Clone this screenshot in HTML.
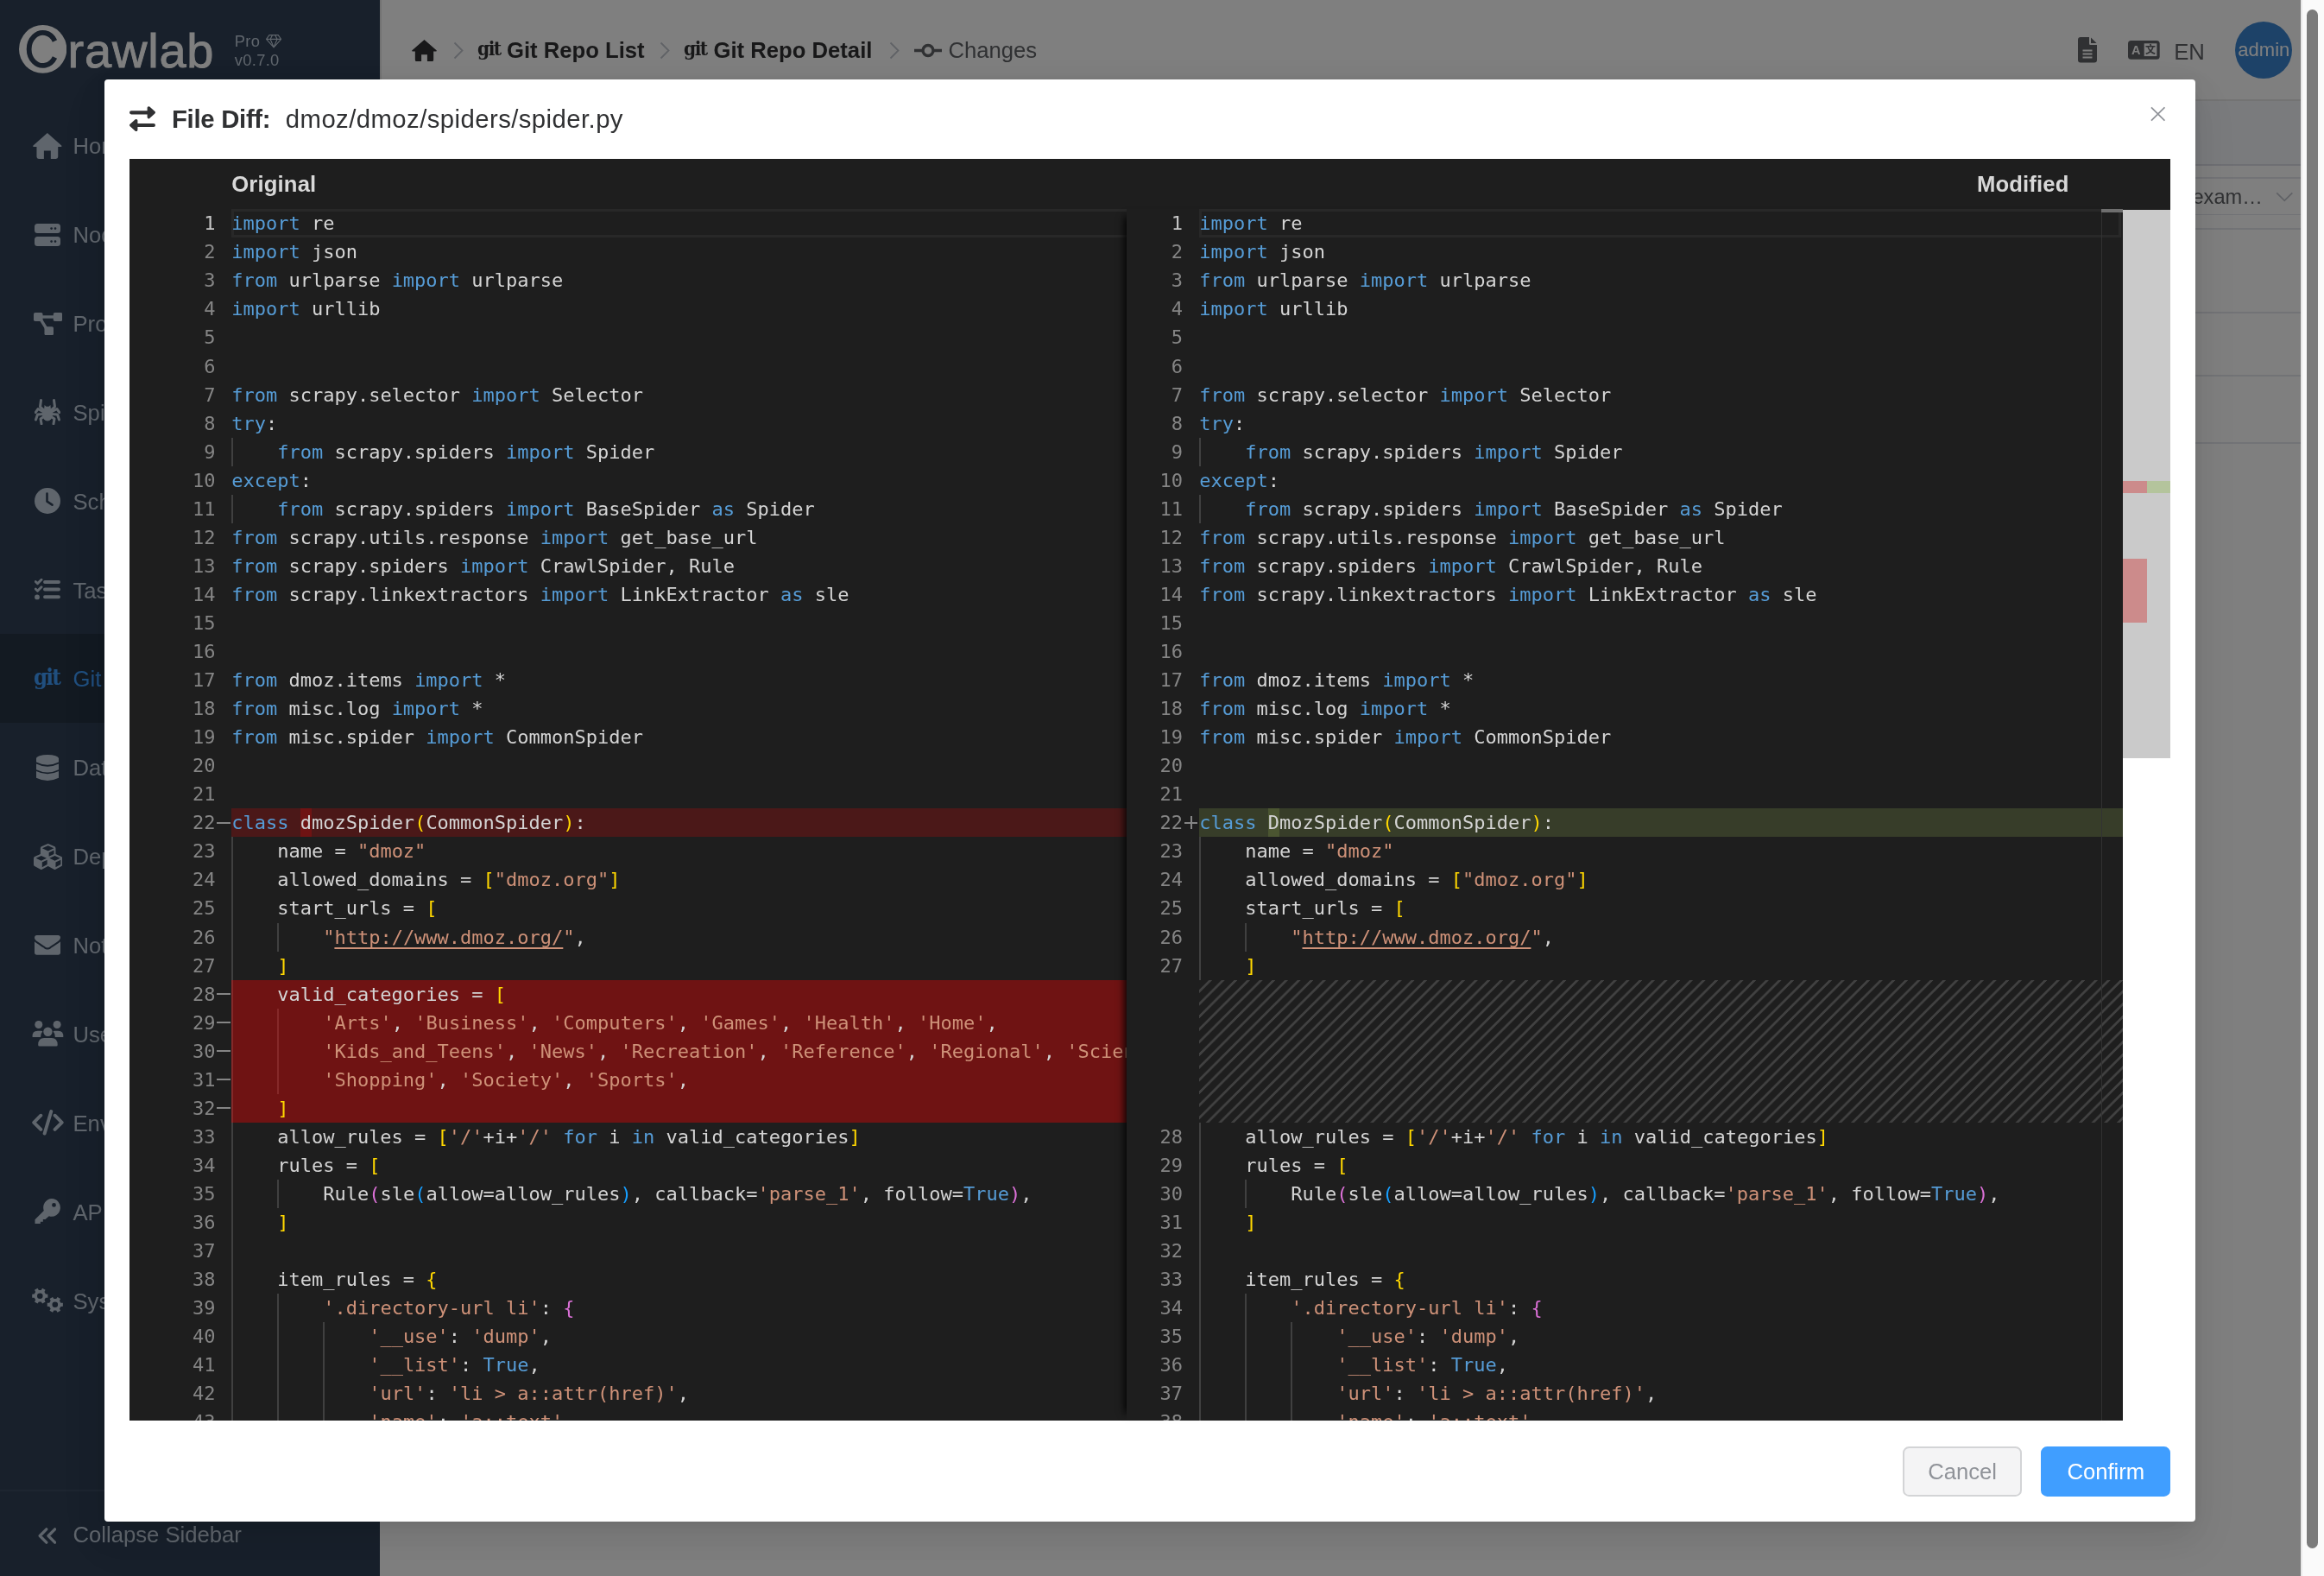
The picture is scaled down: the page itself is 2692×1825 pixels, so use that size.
<!DOCTYPE html><html><head><meta charset="utf-8"><title>Crawlab</title><style>
*{box-sizing:border-box}
html,body{margin:0;padding:0}
body{width:2692px;height:1825px;overflow:hidden;position:relative;background:#fff;font-family:"Liberation Sans",sans-serif;font-size:25.67px;color:#303133}
.abs,.ic,.mi,.n,.l,.g{position:absolute}
#root{position:absolute;left:0;top:0;width:2692px;height:1825px;will-change:transform}
#app{position:absolute;left:0;top:0;width:2664.5px;height:1825px;background:#fff;overflow:hidden}
#side{position:absolute;left:0;top:0;width:440px;height:1825px;background:#304156;overflow:hidden}
.mi{left:0;width:440px;height:102.67px;line-height:102.67px;color:#bfcbd9;font-size:25.67px}
.mi span{position:absolute;left:84.5px}
.mi.act{color:#409eff}
.gitb{position:absolute;top:43px;font-family:"DejaVu Serif Condensed","DejaVu Serif",serif;font-weight:bold;font-size:22.5px;line-height:26px;letter-spacing:-1.500px;color:#303133}
.gitic{position:absolute;font-family:"DejaVu Serif Condensed","DejaVu Serif",serif;font-weight:bold;font-size:25.5px;line-height:30px;letter-spacing:-1.700px}
#hdr{position:absolute;left:440px;top:0;width:2224.5px;height:117.33px;background:#fff;border-bottom:2px solid #e6e6e6;border-left:2px solid #e6e6e6}
.bc{position:absolute;top:0;height:117.33px;line-height:117.33px;font-size:25.67px;white-space:nowrap}
.bc.b{font-weight:bold;color:#303133}
.bc.gr{color:#606266}
#ovl{position:absolute;left:0;top:0;width:2664.5px;height:1825px;background:rgba(0,0,0,.5)}
#sb{position:absolute;left:2664.5px;top:0;width:27.5px;height:1825px;background:#fafafa;border-left:2px solid #e8e8e8}
#sb i{position:absolute;left:5.500px;top:11px;width:13px;height:1782px;border-radius:7px;background:#7b7b7b}
#dlg{position:absolute;left:121.4px;top:92px;width:2421.9px;height:1670px;background:#fff;border-radius:4px;box-shadow:0 22px 59px 7px rgba(0,0,0,.04),0 15px 37px rgba(0,0,0,.08),0 0 12px rgba(0,0,0,.06)}
#ttl{position:absolute;left:199px;top:92px;height:91.67px;line-height:91.67px;font-size:29.33px;color:#303133;white-space:nowrap}
#ttl b{letter-spacing:-0.3px}
#ttl span{position:absolute;left:131.800px;letter-spacing:.42px}
#ed{position:absolute;left:150.3px;top:184px;width:2364.1px;height:58.5px;background:#1e1e1e}
.eh{position:absolute;top:184px;height:58.67px;line-height:58.67px;font-weight:bold;font-size:25.67px;color:#d8d8d8;letter-spacing:.15px;white-space:nowrap}
.pane{position:absolute;overflow:hidden;background:#1e1e1e;font-family:"DejaVu Sans Mono","Liberation Mono",monospace;font-size:22px;color:#d4d4d4}
.n{left:0;height:33.05px;line-height:33.05px;text-align:right;color:#858585;white-space:pre}
.n.a{color:#c6c6c6}
.l{height:33.05px;line-height:33.05px;white-space:pre}
.g{width:1.830px;height:33.1px;background:#404040}
.k{color:#569cd6}.s{color:#ce9178}.b0{color:#ffd700}.b1{color:#da70d6}.b2{color:#179fff}
u{text-decoration:underline;text-decoration-skip-ink:none;text-underline-offset:4px;text-decoration-thickness:1.800px}
.bg{position:absolute}
.btn{position:absolute;top:1674.8px;height:58.67px;line-height:54.67px;border-radius:7.330px;font-size:25.67px;text-align:center;border:2px solid}
</style></head><body><div id="root">
<div id="app">
<div id="hdr"></div>
<svg class="ic" style="left:476.8px;top:45.7px;width:29px;height:25.3px" viewBox="0 0 34 30" preserveAspectRatio="none"><path fill="#303133" d="M17 0L33.500 14.500Q34.300 15.600 33 16L29.500 16L29.500 27.500Q29.500 30 27 30L21 30L21 20.500L13 20.500L13 30L7 30Q4.500 30 4.500 27.500L4.500 16L1 16Q-0.300 15.600 0.500 14.500Z"/></svg>
<svg class="ic" style="left:525px;top:48px;width:12px;height:21px" viewBox="0 0 12 21"><path d="M1.500 1.500L10.500 10.500L1.500 19.500" fill="none" stroke="#c0c4cc" stroke-width="1.800"/></svg>
<svg class="ic" style="left:763.5px;top:48px;width:12px;height:21px" viewBox="0 0 12 21"><path d="M1.500 1.500L10.500 10.500L1.500 19.500" fill="none" stroke="#c0c4cc" stroke-width="1.800"/></svg>
<svg class="ic" style="left:1030px;top:48px;width:12px;height:21px" viewBox="0 0 12 21"><path d="M1.500 1.500L10.500 10.500L1.500 19.500" fill="none" stroke="#c0c4cc" stroke-width="1.800"/></svg>
<div class="gitb" style="left:553px">git</div>
<div class="gitb" style="left:792px">git</div>
<svg class="ic" style="left:1058.5px;top:50px;width:32px;height:17px" viewBox="0 0 32 17"><circle cx="16" cy="8.500" r="6" fill="none" stroke="#606266" stroke-width="3.400"/><path d="M0 8.500h9.500M22.500 8.500H32" stroke="#606266" stroke-width="3.400" stroke-linecap="round"/></svg>
<div class="bc b" style="left:587px">Git Repo List</div>
<div class="bc b" style="left:826.5px">Git Repo Detail</div>
<div class="bc gr" style="left:1098.4px">Changes</div>
<div class="bc gr" style="left:2518.2px;top:1.500px">EN</div>
<div class="abs" style="left:2589.3px;top:24.700px;width:66px;height:66px;border-radius:50%;background:#3a84d0;color:#fff;text-align:center;line-height:65px;font-size:22px">admin</div>
<svg class="ic" style="left:2406.7px;top:43px;width:22px;height:29.500px" viewBox="0 0 22 29.5"><path fill="#606266" fill-rule="evenodd" d="M3 0H13V7.500Q13 9 14.500 9H22V26.500Q22 29.500 19 29.500H3Q0 29.500 0 26.500V3Q0 0 3 0ZM15 0.400L21.600 7H15ZM5.500 14.600H16.500V16.500H5.500ZM5.500 18.600H16.500V20.500H5.500ZM5.500 22.600H16.500V24.500H5.500Z"/></svg>
<svg class="ic" style="left:2465.2px;top:46.900px;width:36.700px;height:21.800px" viewBox="0 0 36.7 21.8"><rect width="36.700" height="21.800" rx="3.600" fill="#606266"/><rect x="18.700" y="3.300" width="14.700" height="14.800" fill="#fff"/><text x="9.200" y="16.400" text-anchor="middle" font-family="Liberation Sans,sans-serif" font-weight="bold" font-size="14.500" fill="#fff">A</text><text x="26.050" y="15.200" text-anchor="middle" font-family="Noto Sans CJK SC,sans-serif" font-weight="bold" font-size="12" fill="#606266">文</text></svg>
<div class="abs" style="left:442px;top:117.33px;width:2222.5px;height:74.500px;background:#f5f7fa;border-bottom:2px solid #dcdfe6"></div>
<div class="abs" style="left:2500px;top:205.4px;width:164.500px;height:1.830px;background:#e4e7ed"></div>
<div class="abs" style="left:2500px;top:247.5px;width:164.500px;height:1.830px;background:#e4e7ed"></div>
<div class="abs" style="left:2500px;top:264px;width:164.500px;height:1.830px;background:#e4e7ed"></div>
<div class="abs" style="left:2500px;top:360.8px;width:164.500px;height:1.830px;background:#e4e7ed"></div>
<div class="abs" style="left:2500px;top:434.1px;width:164.500px;height:1.830px;background:#e4e7ed"></div>
<div class="abs" style="left:2500px;top:511.9px;width:164.500px;height:1.830px;background:#e4e7ed"></div>
<div class="abs" style="left:2539.5px;top:213px;font-size:23.600px;line-height:30px;color:#606266;white-space:nowrap">exam&#8230;</div>
<svg class="ic" style="left:2636px;top:222px;width:20.500px;height:12px" viewBox="0 0 20.5 12"><path d="M1.200 1.300L10.250 10.300L19.300 1.300" fill="none" stroke="#c0c4cc" stroke-width="1.800"/></svg>
<div id="side">
<div class="abs" style="left:0;top:734.4px;width:440px;height:102.4px;background:#263445"></div>
<div class="mi" style="top:118.00px"><span>Home</span></div>
<div class="mi" style="top:220.90px"><span>Nodes</span></div>
<div class="mi" style="top:323.80px"><span>Projects</span></div>
<div class="mi" style="top:426.70px"><span>Spiders</span></div>
<div class="mi" style="top:529.60px"><span>Schedules</span></div>
<div class="mi" style="top:632.50px"><span>Tasks</span></div>
<div class="mi act" style="top:735.40px"><span>Git</span></div>
<div class="mi" style="top:838.30px"><span>Data Sources</span></div>
<div class="mi" style="top:941.20px"><span>Dependencies</span></div>
<div class="mi" style="top:1044.10px"><span>Notifications</span></div>
<div class="mi" style="top:1147.00px"><span>Users</span></div>
<div class="mi" style="top:1249.90px"><span>Environment</span></div>
<div class="mi" style="top:1352.80px"><span>API Tokens</span></div>
<div class="mi" style="top:1455.70px"><span>System</span></div>
<svg class="ic" style="left:38.1px;top:153.9px;width:33.7px;height:29.9px" viewBox="0 0 34 30" preserveAspectRatio="none"><path fill="#bfcbd9" d="M17 0L33.500 14.500Q34.300 15.600 33 16L29.500 16L29.500 27.500Q29.500 30 27 30L21 30L21 20.500L13 20.500L13 30L7 30Q4.500 30 4.500 27.500L4.500 16L1 16Q-0.300 15.600 0.500 14.500Z"/></svg>
<svg class="ic" style="left:40px;top:259px;width:30px;height:26px" viewBox="0 0 30 26"><path fill="#bfcbd9" fill-rule="evenodd" d="M3.5 0h23a3.5 3.5 0 0 1 3.5 3.5v4a3.5 3.5 0 0 1-3.5 3.5h-23A3.5 3.5 0 0 1 0 7.500v-4A3.5 3.5 0 0 1 3.5 0zM19.600 4.200a1.400 1.400 0 1 0 0 2.800a1.400 1.400 0 1 0 0-2.800zM24 4.200a1.400 1.400 0 1 0 0 2.800a1.400 1.400 0 1 0 0-2.800zM3.5 15h23a3.5 3.5 0 0 1 3.5 3.5v4a3.5 3.5 0 0 1-3.5 3.5h-23A3.5 3.5 0 0 1 0 22.500v-4A3.5 3.5 0 0 1 3.500 15zM19.600 19.200a1.400 1.400 0 1 0 0 2.800a1.400 1.400 0 1 0 0-2.800zM24 19.200a1.400 1.400 0 1 0 0 2.800a1.400 1.400 0 1 0 0-2.800z"/></svg>
<svg class="ic" style="left:38.5px;top:361.5px;width:33.3px;height:26.2px" viewBox="0 0 33.3 26.2"><g fill="#bfcbd9"><rect x="0" y="0" width="10.500" height="10" rx="1.800"/><rect x="22.800" y="0" width="10.500" height="10" rx="1.800"/><rect x="12.500" y="16.200" width="10.500" height="10" rx="1.800"/><rect x="9" y="3.300" width="15" height="3.400"/><path d="M6.500 8.500l3-1.700l7.500 12l-3 1.700z"/></g></svg>
<svg class="ic" style="left:40px;top:462.4px;width:30px;height:30.1px" viewBox="0 0 30 30"><g fill="none" stroke="#bfcbd9" stroke-width="3" stroke-linecap="round" stroke-linejoin="round"><path d="M11 13L6.500 9L7.500 1.500"/><path d="M19 13L23.500 9L22.500 1.500"/><path d="M10.500 15L4 11.500L1.200 15.500"/><path d="M19.500 15L26 11.500L28.800 15.500"/><path d="M10.500 17.500L3.500 18L1.500 24"/><path d="M19.500 17.500L26.500 18L28.500 24"/><path d="M11.500 20L7 23L8 28.800"/><path d="M18.500 20L23 23L22 28.800"/></g><ellipse cx="15" cy="18" rx="6" ry="7.500" fill="#bfcbd9"/><path fill="#bfcbd9" d="M11 12.500L11.600 7L13.500 8.800H16.500L18.400 7L19 12.500Z"/></svg>
<svg class="ic" style="left:40px;top:565.2px;width:30px;height:30px" viewBox="0 0 30 30"><circle cx="15" cy="15" r="15" fill="#bfcbd9"/><path d="M14.500 6.500v9.200l6 4" fill="none" stroke="#304156" stroke-width="2.600" stroke-linecap="round" stroke-linejoin="round"/></svg>
<svg class="ic" style="left:40px;top:670.4px;width:30px;height:24.800px" viewBox="0 0 30 24.800"><g fill="none" stroke="#bfcbd9" stroke-linecap="round" stroke-linejoin="round"><path stroke-width="3.900" d="M12 4h16M12 12.500h16M12 21.300h16"/><path stroke-width="2.900" d="M1.200 3.500l2.300 2.300l4.500-4.600M1.200 12l2.300 2.300l4.500-4.600"/></g><circle cx="3" cy="21.400" r="2.900" fill="#bfcbd9"/></svg>
<div class="gitic" style="left:39px;top:769px;color:#409eff">git</div>
<svg class="ic" style="left:41.900px;top:873.9px;width:26.100px;height:29.900px" viewBox="0 0 26 29.9" preserveAspectRatio="none"><g fill="#bfcbd9"><ellipse cx="13" cy="4.600" rx="13" ry="4.600"/><path d="M0 4.600H26V8.500Q13 15 0 8.500Z"/><path d="M0 10.450Q13 16.950 26 10.450V17.150Q13 23.650 0 17.150Z"/><path d="M0 19.050Q13 25.550 26 19.050V26.650Q13 33.150 0 26.650Z"/></g></svg>
<svg class="ic" style="left:38.5px;top:976.8px;width:33.3px;height:29.9px" viewBox="0 0 2176 1792" preserveAspectRatio="none" ><path fill="#bfcbd9" d="M640 1632 1024 1440V1126L640 1290ZM576 1178 980 1005 576 832 172 1005ZM1664 1632 2048 1440V1126L1664 1290ZM1600 1178 2004 1005 1600 832 1196 1005ZM1152 885 1536 720V454L1152 618ZM1088 506 1529 317 1088 128 647 317ZM2176 1024V1440Q2176 1476 2157 1507Q2138 1538 2105 1554L1657 1778Q1632 1792 1600 1792Q1568 1792 1543 1778L1095 1554Q1091 1552 1088 1550Q1086 1552 1081 1554L633 1778Q608 1792 576 1792Q544 1792 519 1778L71 1554Q38 1538 19 1507Q0 1476 0 1440V1024Q0 986 22 954Q43 922 78 906L512 720V320Q512 282 534 250Q555 218 590 202L1038 10Q1061 0 1088 0Q1115 0 1138 10L1586 202Q1621 218 1642 250Q1664 282 1664 320V720L2098 906Q2134 922 2155 954Q2176 986 2176 1024Z"/></svg>
<svg class="ic" style="left:40px;top:1082.8px;width:30px;height:22.8px" viewBox="0 0 1792 1408" preserveAspectRatio="none" ><path fill="#bfcbd9" d="M1792 454V1248Q1792 1314 1745 1361Q1698 1408 1632 1408H160Q94 1408 47 1361Q0 1314 0 1248V454Q44 503 101 541Q463 787 598 886Q655 928 690 952Q726 975 785 1000Q844 1024 895 1024H896H897Q948 1024 1007 1000Q1066 975 1102 952Q1137 928 1194 886Q1364 763 1692 541Q1749 502 1792 454ZM1792 160Q1792 239 1743 311Q1694 383 1621 434Q1245 695 1153 759Q1143 766 1110 790Q1078 813 1056 828Q1035 842 1004 860Q974 878 947 887Q920 896 897 896H896H895Q872 896 845 887Q818 878 788 860Q757 842 736 828Q714 813 682 790Q649 766 639 759Q548 695 377 576Q206 458 172 434Q110 392 55 318Q0 245 0 182Q0 104 42 52Q83 0 160 0H1632Q1697 0 1744 47Q1792 94 1792 160Z"/></svg>
<svg class="ic" style="left:36.800px;top:1182.4px;width:36.900px;height:29.500px" viewBox="0 0 36.9 29.5"><g fill="#bfcbd9"><circle cx="7.800" cy="4.500" r="4.500"/><circle cx="29.100" cy="4.500" r="4.500"/><circle cx="18.450" cy="12.800" r="5.200"/><path d="M0.600 19Q0 11.800 6.500 11.800H10.800Q11.800 11.800 12.300 12.600Q9.800 15 10 19Z"/><path d="M36.300 19Q36.900 11.800 30.400 11.800H26.100Q25.100 11.800 24.600 12.600Q27.100 15 26.900 19Z"/><path d="M7.200 28Q7.200 20 14.200 20H22.700Q29.700 20 29.700 28Q29.700 29.500 28.200 29.500H8.700Q7.200 29.500 7.200 28Z"/></g></svg>
<svg class="ic" style="left:36.800px;top:1285.2px;width:36.900px;height:29.600px" viewBox="0 0 36.9 29.6"><g fill="none" stroke="#bfcbd9" stroke-width="3.900" stroke-linecap="round" stroke-linejoin="round"><path d="M10.300 6.700L2.200 14.800L10.300 22.900"/><path d="M26.600 6.700L34.700 14.800L26.600 22.900"/><path d="M22.300 2L14.600 27.600"/></g></svg>
<svg class="ic" style="left:40px;top:1387.6px;width:30px;height:29.400px" viewBox="0 0 30 29.4"><path fill="#bfcbd9" fill-rule="evenodd" d="M20 0a10 10.400 0 1 1 -3.200 20.300L12.500 24H9.800V26.800H6.800V29.400H0.500V24.200L10.800 14A10 10.400 0 0 1 20 0ZM22.500 5a2.400 2.400 0 1 0 0 4.800a2.400 2.400 0 1 0 0-4.800Z"/></svg>
<svg class="ic" style="left:36.800px;top:1491px;width:36.500px;height:29.400px" viewBox="0 0 36.5 29.4"><path fill="#bfcbd9" fill-rule="evenodd" d="M15.86 7.57L18.38 7.67L18.38 11.73L15.86 11.83L14.43 14.32L15.59 16.55L12.08 18.57L10.73 16.45L7.87 16.45L6.52 18.57L3.01 16.55L4.17 14.32L2.74 11.83L0.22 11.73L0.22 7.67L2.74 7.57L4.17 5.08L3.01 2.85L6.52 0.83L7.87 2.95L10.73 2.95L12.08 0.83L15.59 2.85L14.43 5.08ZM6.00 9.70a3.3 3.3 0 1 0 6.6 0a3.3 3.3 0 1 0 -6.6 0ZM33.36 17.67L35.88 17.77L35.88 21.83L33.36 21.93L31.93 24.42L33.09 26.65L29.58 28.67L28.23 26.55L25.37 26.55L24.02 28.67L20.51 26.65L21.67 24.42L20.24 21.93L17.72 21.83L17.72 17.77L20.24 17.67L21.67 15.18L20.51 12.95L24.02 10.93L25.37 13.05L28.23 13.05L29.58 10.93L33.09 12.95L31.93 15.18ZM23.50 19.80a3.3 3.3 0 1 0 6.6 0a3.3 3.3 0 1 0 -6.6 0Z"/></svg>
<div class="abs" style="left:78.500px;top:24.500px;font-size:56px;line-height:68px;letter-spacing:.8px;color:#fff;-webkit-text-stroke:.9px #fff;white-space:nowrap">rawlab</div>
<svg class="ic" style="left:22.040px;top:29.140px;width:55.300px;height:55.800px" viewBox="0 0 55.3 55.8"><ellipse cx="27.650" cy="27.900" rx="27.650" ry="27.900" fill="#fff"/><path d="M41.500 18.400A16 19 0 1 0 41.500 37.400" fill="none" stroke="#304156" stroke-width="5.800"/></svg>
<div class="abs" style="left:271.8px;top:36.500px;font-size:18.33px;line-height:22px;letter-spacing:.3px;color:#bfcbd9;white-space:nowrap">Pro</div>
<div class="abs" style="left:271.8px;top:58.500px;font-size:18.33px;line-height:22px;letter-spacing:.3px;color:#bfcbd9;white-space:nowrap">v0.7.0</div>
<svg class="ic" style="left:307.5px;top:40.2px;width:18.2px;height:15.5px" viewBox="0 0 2048 1664" preserveAspectRatio="none" ><path fill="#bfcbd9" d="M212 640 835 1305 535 640ZM1024 1412 1373 640H675ZM538 512 742 128H480L192 512ZM1213 1305 1836 640H1513ZM683 512H1365L1161 128H887ZM1510 512H1856L1568 128H1306ZM1651 26 2035 538Q2049 556 2048 580Q2047 603 2031 620L1071 1644Q1053 1664 1024 1664Q995 1664 977 1644L17 620Q1 603 0 580Q-1 556 13 538L397 26Q415 0 448 0H1600Q1633 0 1651 26Z"/></svg>
<div class="abs" style="left:0;top:1724.5px;width:440px;height:101px;border-top:2px solid #3a4b60;background:#304156;color:#bfcbd9;line-height:101px"><span style="position:absolute;left:84.5px">Collapse Sidebar</span></div>
<svg class="ic" style="left:43.500px;top:1768.5px;width:21.500px;height:19px" viewBox="0 0 21.5 19"><path d="M9.800 1.800L2.200 9.500L9.800 17.200M19.600 1.800L12 9.500L19.600 17.200" fill="none" stroke="#bfcbd9" stroke-width="3.300" stroke-linejoin="round" stroke-linecap="round"/></svg>
</div>
</div>
<div id="ovl"></div>
<div id="sb"><i></i></div>
<div id="dlg"></div>
<svg class="ic" style="left:150.1px;top:122.9px;width:30px;height:29.500px" viewBox="0 0 30 29.5"><g stroke="#303133" fill="#303133" stroke-linecap="round" stroke-linejoin="round"><path d="M2.100 7.300H22M27.900 22H8" stroke-width="4.200" fill="none"/><path d="M22.200 1.800L28.300 7.300L22.200 12.800ZM7.800 16.500L1.700 22L7.800 27.500Z" stroke-width="3.200"/></g></svg>
<div id="ttl"><b>File Diff:</b><span>dmoz/dmoz/spiders/spider.py</span></div>
<svg class="ic" style="left:2490.6px;top:123px;width:17.400px;height:18px" viewBox="0 0 18 18"><path d="M1 1L17 17M17 1L1 17" stroke="#909399" stroke-width="1.800" fill="none"/></svg>
<div id="ed"></div>
<div class="eh" style="left:268.2px">Original</div>
<div class="eh" style="left:2289.9px">Modified</div>
<div class="abs" style="left:2458.7px;top:242.67px;width:55.700px;height:635.6px;background:#cacaca"></div>
<div class="abs" style="left:2458.7px;top:556.8px;width:28.100px;height:14.100px;background:#cc8b8b"></div>
<div class="abs" style="left:2486.8px;top:556.8px;width:27.600px;height:14.100px;background:#b4c49c"></div>
<div class="abs" style="left:2458.7px;top:646.9px;width:28.100px;height:74.100px;background:#cc8b8b"></div>
<div class="pane" style="left:150.3px;top:242.3px;width:1154.60px;height:1402.70px">
<i class="g" style="left:117.90px;top:264.4px"></i>
<i class="g" style="left:117.90px;top:330.5px"></i>
<i class="g" style="left:117.90px;top:727.1px"></i>
<i class="g" style="left:117.90px;top:760.15px"></i>
<i class="g" style="left:117.90px;top:793.2px"></i>
<i class="g" style="left:117.90px;top:826.25px"></i>
<i class="g" style="left:170.88px;top:826.25px"></i>
<i class="g" style="left:117.90px;top:859.3px"></i>
<i class="g" style="left:117.90px;top:892.35px"></i>
<i class="g" style="left:117.90px;top:925.4px"></i>
<i class="g" style="left:170.88px;top:925.4px"></i>
<i class="g" style="left:117.90px;top:958.45px"></i>
<i class="g" style="left:170.88px;top:958.45px"></i>
<i class="g" style="left:117.90px;top:991.5px"></i>
<i class="g" style="left:170.88px;top:991.5px"></i>
<i class="g" style="left:117.90px;top:1024.55px"></i>
<i class="g" style="left:117.90px;top:1057.6px"></i>
<i class="g" style="left:117.90px;top:1090.65px"></i>
<i class="g" style="left:117.90px;top:1123.7px"></i>
<i class="g" style="left:170.88px;top:1123.7px"></i>
<i class="g" style="left:117.90px;top:1156.75px"></i>
<i class="g" style="left:117.90px;top:1189.8px"></i>
<i class="g" style="left:117.90px;top:1222.85px"></i>
<i class="g" style="left:117.90px;top:1255.9px"></i>
<i class="g" style="left:170.88px;top:1255.9px"></i>
<i class="g" style="left:117.90px;top:1288.95px"></i>
<i class="g" style="left:170.88px;top:1288.95px"></i>
<i class="g" style="left:223.86px;top:1288.95px"></i>
<i class="g" style="left:117.90px;top:1322.0px"></i>
<i class="g" style="left:170.88px;top:1322.0px"></i>
<i class="g" style="left:223.86px;top:1322.0px"></i>
<i class="g" style="left:117.90px;top:1355.05px"></i>
<i class="g" style="left:170.88px;top:1355.05px"></i>
<i class="g" style="left:223.86px;top:1355.05px"></i>
<i class="g" style="left:117.90px;top:1388.1px"></i>
<i class="g" style="left:170.88px;top:1388.1px"></i>
<i class="g" style="left:223.86px;top:1388.1px"></i>
<div class="bg" style="left:117.90px;top:694.05px;width:2000px;height:33.05px;background:rgba(255,0,0,.2)"></div>
<div class="bg" style="left:197.37px;top:694.05px;width:13.25px;height:33.05px;background:rgba(255,0,0,.2)"></div>
<div class="bg" style="left:117.90px;top:892.35px;width:2000px;height:165.25px;background:rgba(255,0,0,.36)"></div>
<div class="bg" style="left:117.90px;top:0;width:2000px;height:33.05px;border:3.670px solid #282828"></div>
<div class="bg" style="left:101.20px;top:709.5px;width:15.500px;height:1.800px;background:#858585"></div>
<div class="bg" style="left:101.20px;top:907.8px;width:15.500px;height:1.800px;background:#858585"></div>
<div class="bg" style="left:101.20px;top:940.9px;width:15.500px;height:1.800px;background:#858585"></div>
<div class="bg" style="left:101.20px;top:973.9px;width:15.500px;height:1.800px;background:#858585"></div>
<div class="bg" style="left:101.20px;top:1007.0px;width:15.500px;height:1.800px;background:#858585"></div>
<div class="bg" style="left:101.20px;top:1040.0px;width:15.500px;height:1.800px;background:#858585"></div>
<div class="n a" style="top:0.0px;width:99.19999999999999px">1</div>
<div class="l" style="top:0.0px;left:117.89999999999998px"><span class="k">import</span> re</div>
<div class="n" style="top:33.05px;width:99.19999999999999px">2</div>
<div class="l" style="top:33.05px;left:117.89999999999998px"><span class="k">import</span> json</div>
<div class="n" style="top:66.1px;width:99.19999999999999px">3</div>
<div class="l" style="top:66.1px;left:117.89999999999998px"><span class="k">from</span> urlparse <span class="k">import</span> urlparse</div>
<div class="n" style="top:99.15px;width:99.19999999999999px">4</div>
<div class="l" style="top:99.15px;left:117.89999999999998px"><span class="k">import</span> urllib</div>
<div class="n" style="top:132.2px;width:99.19999999999999px">5</div>
<div class="l" style="top:132.2px;left:117.89999999999998px"></div>
<div class="n" style="top:165.25px;width:99.19999999999999px">6</div>
<div class="l" style="top:165.25px;left:117.89999999999998px"></div>
<div class="n" style="top:198.3px;width:99.19999999999999px">7</div>
<div class="l" style="top:198.3px;left:117.89999999999998px"><span class="k">from</span> scrapy.selector <span class="k">import</span> Selector</div>
<div class="n" style="top:231.35px;width:99.19999999999999px">8</div>
<div class="l" style="top:231.35px;left:117.89999999999998px"><span class="k">try</span>:</div>
<div class="n" style="top:264.4px;width:99.19999999999999px">9</div>
<div class="l" style="top:264.4px;left:117.89999999999998px">    <span class="k">from</span> scrapy.spiders <span class="k">import</span> Spider</div>
<div class="n" style="top:297.45px;width:99.19999999999999px">10</div>
<div class="l" style="top:297.45px;left:117.89999999999998px"><span class="k">except</span>:</div>
<div class="n" style="top:330.5px;width:99.19999999999999px">11</div>
<div class="l" style="top:330.5px;left:117.89999999999998px">    <span class="k">from</span> scrapy.spiders <span class="k">import</span> BaseSpider <span class="k">as</span> Spider</div>
<div class="n" style="top:363.55px;width:99.19999999999999px">12</div>
<div class="l" style="top:363.55px;left:117.89999999999998px"><span class="k">from</span> scrapy.utils.response <span class="k">import</span> get_base_url</div>
<div class="n" style="top:396.6px;width:99.19999999999999px">13</div>
<div class="l" style="top:396.6px;left:117.89999999999998px"><span class="k">from</span> scrapy.spiders <span class="k">import</span> CrawlSpider, Rule</div>
<div class="n" style="top:429.65px;width:99.19999999999999px">14</div>
<div class="l" style="top:429.65px;left:117.89999999999998px"><span class="k">from</span> scrapy.linkextractors <span class="k">import</span> LinkExtractor <span class="k">as</span> sle</div>
<div class="n" style="top:462.7px;width:99.19999999999999px">15</div>
<div class="l" style="top:462.7px;left:117.89999999999998px"></div>
<div class="n" style="top:495.75px;width:99.19999999999999px">16</div>
<div class="l" style="top:495.75px;left:117.89999999999998px"></div>
<div class="n" style="top:528.8px;width:99.19999999999999px">17</div>
<div class="l" style="top:528.8px;left:117.89999999999998px"><span class="k">from</span> dmoz.items <span class="k">import</span> *</div>
<div class="n" style="top:561.85px;width:99.19999999999999px">18</div>
<div class="l" style="top:561.85px;left:117.89999999999998px"><span class="k">from</span> misc.log <span class="k">import</span> *</div>
<div class="n" style="top:594.9px;width:99.19999999999999px">19</div>
<div class="l" style="top:594.9px;left:117.89999999999998px"><span class="k">from</span> misc.spider <span class="k">import</span> CommonSpider</div>
<div class="n" style="top:627.95px;width:99.19999999999999px">20</div>
<div class="l" style="top:627.95px;left:117.89999999999998px"></div>
<div class="n" style="top:661.0px;width:99.19999999999999px">21</div>
<div class="l" style="top:661.0px;left:117.89999999999998px"></div>
<div class="n" style="top:694.05px;width:99.19999999999999px">22</div>
<div class="l" style="top:694.05px;left:117.89999999999998px"><span class="k">class</span> dmozSpider<span class="b0">(</span>CommonSpider<span class="b0">)</span>:</div>
<div class="n" style="top:727.1px;width:99.19999999999999px">23</div>
<div class="l" style="top:727.1px;left:117.89999999999998px">    name = <span class="s">"dmoz"</span></div>
<div class="n" style="top:760.15px;width:99.19999999999999px">24</div>
<div class="l" style="top:760.15px;left:117.89999999999998px">    allowed_domains = <span class="b0">[</span><span class="s">"dmoz.org"</span><span class="b0">]</span></div>
<div class="n" style="top:793.2px;width:99.19999999999999px">25</div>
<div class="l" style="top:793.2px;left:117.89999999999998px">    start_urls = <span class="b0">[</span></div>
<div class="n" style="top:826.25px;width:99.19999999999999px">26</div>
<div class="l" style="top:826.25px;left:117.89999999999998px">        <span class="s">"<u>http://www.dmoz.org/</u>"</span>,</div>
<div class="n" style="top:859.3px;width:99.19999999999999px">27</div>
<div class="l" style="top:859.3px;left:117.89999999999998px">    <span class="b0">]</span></div>
<div class="n" style="top:892.35px;width:99.19999999999999px">28</div>
<div class="l" style="top:892.35px;left:117.89999999999998px">    valid_categories = <span class="b0">[</span></div>
<div class="n" style="top:925.4px;width:99.19999999999999px">29</div>
<div class="l" style="top:925.4px;left:117.89999999999998px">        <span class="s">'Arts'</span>, <span class="s">'Business'</span>, <span class="s">'Computers'</span>, <span class="s">'Games'</span>, <span class="s">'Health'</span>, <span class="s">'Home'</span>,</div>
<div class="n" style="top:958.45px;width:99.19999999999999px">30</div>
<div class="l" style="top:958.45px;left:117.89999999999998px">        <span class="s">'Kids_and_Teens'</span>, <span class="s">'News'</span>, <span class="s">'Recreation'</span>, <span class="s">'Reference'</span>, <span class="s">'Regional'</span>, <span class="s">'Science'</span>,</div>
<div class="n" style="top:991.5px;width:99.19999999999999px">31</div>
<div class="l" style="top:991.5px;left:117.89999999999998px">        <span class="s">'Shopping'</span>, <span class="s">'Society'</span>, <span class="s">'Sports'</span>,</div>
<div class="n" style="top:1024.55px;width:99.19999999999999px">32</div>
<div class="l" style="top:1024.55px;left:117.89999999999998px">    <span class="b0">]</span></div>
<div class="n" style="top:1057.6px;width:99.19999999999999px">33</div>
<div class="l" style="top:1057.6px;left:117.89999999999998px">    allow_rules = <span class="b0">[</span><span class="s">'/'</span>+i+<span class="s">'/'</span> <span class="k">for</span> i <span class="k">in</span> valid_categories<span class="b0">]</span></div>
<div class="n" style="top:1090.65px;width:99.19999999999999px">34</div>
<div class="l" style="top:1090.65px;left:117.89999999999998px">    rules = <span class="b0">[</span></div>
<div class="n" style="top:1123.7px;width:99.19999999999999px">35</div>
<div class="l" style="top:1123.7px;left:117.89999999999998px">        Rule<span class="b1">(</span>sle<span class="b2">(</span>allow=allow_rules<span class="b2">)</span>, callback=<span class="s">'parse_1'</span>, follow=<span class="k">True</span><span class="b1">)</span>,</div>
<div class="n" style="top:1156.75px;width:99.19999999999999px">36</div>
<div class="l" style="top:1156.75px;left:117.89999999999998px">    <span class="b0">]</span></div>
<div class="n" style="top:1189.8px;width:99.19999999999999px">37</div>
<div class="l" style="top:1189.8px;left:117.89999999999998px"></div>
<div class="n" style="top:1222.85px;width:99.19999999999999px">38</div>
<div class="l" style="top:1222.85px;left:117.89999999999998px">    item_rules = <span class="b0">{</span></div>
<div class="n" style="top:1255.9px;width:99.19999999999999px">39</div>
<div class="l" style="top:1255.9px;left:117.89999999999998px">        <span class="s">'.directory-url li'</span>: <span class="b1">{</span></div>
<div class="n" style="top:1288.95px;width:99.19999999999999px">40</div>
<div class="l" style="top:1288.95px;left:117.89999999999998px">            <span class="s">'__use'</span>: <span class="s">'dump'</span>,</div>
<div class="n" style="top:1322.0px;width:99.19999999999999px">41</div>
<div class="l" style="top:1322.0px;left:117.89999999999998px">            <span class="s">'__list'</span>: <span class="k">True</span>,</div>
<div class="n" style="top:1355.05px;width:99.19999999999999px">42</div>
<div class="l" style="top:1355.05px;left:117.89999999999998px">            <span class="s">'url'</span>: <span class="s">'li &gt; a::attr(href)'</span>,</div>
<div class="n" style="top:1388.1px;width:99.19999999999999px">43</div>
<div class="l" style="top:1388.1px;left:117.89999999999998px">            <span class="s">'name'</span>: <span class="s">'a::text'</span>,</div>
</div>
<div class="pane" style="left:1304.9px;top:242.3px;width:1153.80px;height:1402.70px;box-shadow:-11px 0 9px -9px #000">
<i class="g" style="left:84.40px;top:264.4px"></i>
<i class="g" style="left:84.40px;top:330.5px"></i>
<i class="g" style="left:84.40px;top:727.1px"></i>
<i class="g" style="left:84.40px;top:760.15px"></i>
<i class="g" style="left:84.40px;top:793.2px"></i>
<i class="g" style="left:84.40px;top:826.25px"></i>
<i class="g" style="left:137.38px;top:826.25px"></i>
<i class="g" style="left:84.40px;top:859.3px"></i>
<i class="g" style="left:84.40px;top:1057.6px"></i>
<i class="g" style="left:84.40px;top:1090.65px"></i>
<i class="g" style="left:84.40px;top:1123.7px"></i>
<i class="g" style="left:137.38px;top:1123.7px"></i>
<i class="g" style="left:84.40px;top:1156.75px"></i>
<i class="g" style="left:84.40px;top:1189.8px"></i>
<i class="g" style="left:84.40px;top:1222.85px"></i>
<i class="g" style="left:84.40px;top:1255.9px"></i>
<i class="g" style="left:137.38px;top:1255.9px"></i>
<i class="g" style="left:84.40px;top:1288.95px"></i>
<i class="g" style="left:137.38px;top:1288.95px"></i>
<i class="g" style="left:190.36px;top:1288.95px"></i>
<i class="g" style="left:84.40px;top:1322.0px"></i>
<i class="g" style="left:137.38px;top:1322.0px"></i>
<i class="g" style="left:190.36px;top:1322.0px"></i>
<i class="g" style="left:84.40px;top:1355.05px"></i>
<i class="g" style="left:137.38px;top:1355.05px"></i>
<i class="g" style="left:190.36px;top:1355.05px"></i>
<i class="g" style="left:84.40px;top:1388.1px"></i>
<i class="g" style="left:137.38px;top:1388.1px"></i>
<i class="g" style="left:190.36px;top:1388.1px"></i>
<div class="bg" style="left:84.40px;top:694.05px;width:2000px;height:33.05px;background:rgba(155,185,85,.2)"></div>
<div class="bg" style="left:163.87px;top:694.05px;width:13.25px;height:33.05px;background:rgba(155,185,85,.2)"></div>
<div class="bg" style="left:84.40px;top:892.35px;width:2000px;height:165.25px;background-image:linear-gradient(-45deg,rgba(204,204,204,.2) 12.5%,transparent 12.5%,transparent 50%,rgba(204,204,204,.2) 50%,rgba(204,204,204,.2) 62.5%,transparent 62.5%,transparent 100%);background-size:14.670px 14.670px"></div>
<div class="bg" style="left:84.40px;top:0;width:1068px;height:33.05px;border:3.670px solid #282828"></div>
<div class="bg" style="left:67.10px;top:709.5px;width:15.500px;height:1.800px;background:#858585"></div>
<div class="bg" style="left:74.00px;top:702.5px;width:1.800px;height:15.500px;background:#858585"></div>
<div class="bg" style="left:1128.80px;top:0;width:1.800px;height:1402.7px;background:#323232"></div>
<div class="bg" style="left:1128.80px;top:0;width:25px;height:3.500px;background:#6e6e6e"></div>
<div class="n a" style="top:0.0px;width:65.09999999999991px">1</div>
<div class="l" style="top:0.0px;left:84.39999999999986px"><span class="k">import</span> re</div>
<div class="n" style="top:33.05px;width:65.09999999999991px">2</div>
<div class="l" style="top:33.05px;left:84.39999999999986px"><span class="k">import</span> json</div>
<div class="n" style="top:66.1px;width:65.09999999999991px">3</div>
<div class="l" style="top:66.1px;left:84.39999999999986px"><span class="k">from</span> urlparse <span class="k">import</span> urlparse</div>
<div class="n" style="top:99.15px;width:65.09999999999991px">4</div>
<div class="l" style="top:99.15px;left:84.39999999999986px"><span class="k">import</span> urllib</div>
<div class="n" style="top:132.2px;width:65.09999999999991px">5</div>
<div class="l" style="top:132.2px;left:84.39999999999986px"></div>
<div class="n" style="top:165.25px;width:65.09999999999991px">6</div>
<div class="l" style="top:165.25px;left:84.39999999999986px"></div>
<div class="n" style="top:198.3px;width:65.09999999999991px">7</div>
<div class="l" style="top:198.3px;left:84.39999999999986px"><span class="k">from</span> scrapy.selector <span class="k">import</span> Selector</div>
<div class="n" style="top:231.35px;width:65.09999999999991px">8</div>
<div class="l" style="top:231.35px;left:84.39999999999986px"><span class="k">try</span>:</div>
<div class="n" style="top:264.4px;width:65.09999999999991px">9</div>
<div class="l" style="top:264.4px;left:84.39999999999986px">    <span class="k">from</span> scrapy.spiders <span class="k">import</span> Spider</div>
<div class="n" style="top:297.45px;width:65.09999999999991px">10</div>
<div class="l" style="top:297.45px;left:84.39999999999986px"><span class="k">except</span>:</div>
<div class="n" style="top:330.5px;width:65.09999999999991px">11</div>
<div class="l" style="top:330.5px;left:84.39999999999986px">    <span class="k">from</span> scrapy.spiders <span class="k">import</span> BaseSpider <span class="k">as</span> Spider</div>
<div class="n" style="top:363.55px;width:65.09999999999991px">12</div>
<div class="l" style="top:363.55px;left:84.39999999999986px"><span class="k">from</span> scrapy.utils.response <span class="k">import</span> get_base_url</div>
<div class="n" style="top:396.6px;width:65.09999999999991px">13</div>
<div class="l" style="top:396.6px;left:84.39999999999986px"><span class="k">from</span> scrapy.spiders <span class="k">import</span> CrawlSpider, Rule</div>
<div class="n" style="top:429.65px;width:65.09999999999991px">14</div>
<div class="l" style="top:429.65px;left:84.39999999999986px"><span class="k">from</span> scrapy.linkextractors <span class="k">import</span> LinkExtractor <span class="k">as</span> sle</div>
<div class="n" style="top:462.7px;width:65.09999999999991px">15</div>
<div class="l" style="top:462.7px;left:84.39999999999986px"></div>
<div class="n" style="top:495.75px;width:65.09999999999991px">16</div>
<div class="l" style="top:495.75px;left:84.39999999999986px"></div>
<div class="n" style="top:528.8px;width:65.09999999999991px">17</div>
<div class="l" style="top:528.8px;left:84.39999999999986px"><span class="k">from</span> dmoz.items <span class="k">import</span> *</div>
<div class="n" style="top:561.85px;width:65.09999999999991px">18</div>
<div class="l" style="top:561.85px;left:84.39999999999986px"><span class="k">from</span> misc.log <span class="k">import</span> *</div>
<div class="n" style="top:594.9px;width:65.09999999999991px">19</div>
<div class="l" style="top:594.9px;left:84.39999999999986px"><span class="k">from</span> misc.spider <span class="k">import</span> CommonSpider</div>
<div class="n" style="top:627.95px;width:65.09999999999991px">20</div>
<div class="l" style="top:627.95px;left:84.39999999999986px"></div>
<div class="n" style="top:661.0px;width:65.09999999999991px">21</div>
<div class="l" style="top:661.0px;left:84.39999999999986px"></div>
<div class="n" style="top:694.05px;width:65.09999999999991px">22</div>
<div class="l" style="top:694.05px;left:84.39999999999986px"><span class="k">class</span> DmozSpider<span class="b0">(</span>CommonSpider<span class="b0">)</span>:</div>
<div class="n" style="top:727.1px;width:65.09999999999991px">23</div>
<div class="l" style="top:727.1px;left:84.39999999999986px">    name = <span class="s">"dmoz"</span></div>
<div class="n" style="top:760.15px;width:65.09999999999991px">24</div>
<div class="l" style="top:760.15px;left:84.39999999999986px">    allowed_domains = <span class="b0">[</span><span class="s">"dmoz.org"</span><span class="b0">]</span></div>
<div class="n" style="top:793.2px;width:65.09999999999991px">25</div>
<div class="l" style="top:793.2px;left:84.39999999999986px">    start_urls = <span class="b0">[</span></div>
<div class="n" style="top:826.25px;width:65.09999999999991px">26</div>
<div class="l" style="top:826.25px;left:84.39999999999986px">        <span class="s">"<u>http://www.dmoz.org/</u>"</span>,</div>
<div class="n" style="top:859.3px;width:65.09999999999991px">27</div>
<div class="l" style="top:859.3px;left:84.39999999999986px">    <span class="b0">]</span></div>
<div class="n" style="top:1057.6px;width:65.09999999999991px">28</div>
<div class="l" style="top:1057.6px;left:84.39999999999986px">    allow_rules = <span class="b0">[</span><span class="s">'/'</span>+i+<span class="s">'/'</span> <span class="k">for</span> i <span class="k">in</span> valid_categories<span class="b0">]</span></div>
<div class="n" style="top:1090.65px;width:65.09999999999991px">29</div>
<div class="l" style="top:1090.65px;left:84.39999999999986px">    rules = <span class="b0">[</span></div>
<div class="n" style="top:1123.7px;width:65.09999999999991px">30</div>
<div class="l" style="top:1123.7px;left:84.39999999999986px">        Rule<span class="b1">(</span>sle<span class="b2">(</span>allow=allow_rules<span class="b2">)</span>, callback=<span class="s">'parse_1'</span>, follow=<span class="k">True</span><span class="b1">)</span>,</div>
<div class="n" style="top:1156.75px;width:65.09999999999991px">31</div>
<div class="l" style="top:1156.75px;left:84.39999999999986px">    <span class="b0">]</span></div>
<div class="n" style="top:1189.8px;width:65.09999999999991px">32</div>
<div class="l" style="top:1189.8px;left:84.39999999999986px"></div>
<div class="n" style="top:1222.85px;width:65.09999999999991px">33</div>
<div class="l" style="top:1222.85px;left:84.39999999999986px">    item_rules = <span class="b0">{</span></div>
<div class="n" style="top:1255.9px;width:65.09999999999991px">34</div>
<div class="l" style="top:1255.9px;left:84.39999999999986px">        <span class="s">'.directory-url li'</span>: <span class="b1">{</span></div>
<div class="n" style="top:1288.95px;width:65.09999999999991px">35</div>
<div class="l" style="top:1288.95px;left:84.39999999999986px">            <span class="s">'__use'</span>: <span class="s">'dump'</span>,</div>
<div class="n" style="top:1322.0px;width:65.09999999999991px">36</div>
<div class="l" style="top:1322.0px;left:84.39999999999986px">            <span class="s">'__list'</span>: <span class="k">True</span>,</div>
<div class="n" style="top:1355.05px;width:65.09999999999991px">37</div>
<div class="l" style="top:1355.05px;left:84.39999999999986px">            <span class="s">'url'</span>: <span class="s">'li &gt; a::attr(href)'</span>,</div>
<div class="n" style="top:1388.1px;width:65.09999999999991px">38</div>
<div class="l" style="top:1388.1px;left:84.39999999999986px">            <span class="s">'name'</span>: <span class="s">'a::text'</span>,</div>
</div>
<div class="btn" style="left:2204.3px;width:137.7px;background:#f4f4f5;border-color:#d3d4d6;color:#909399">Cancel</div>
<div class="btn" style="left:2364.4px;width:149.8px;background:#409eff;border-color:#409eff;color:#fff">Confirm</div>
</div></body></html>
